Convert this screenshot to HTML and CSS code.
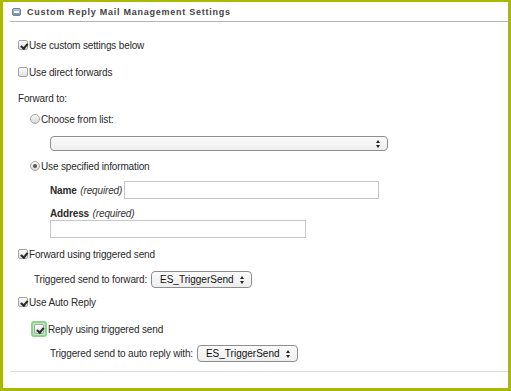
FILE: index.html
```html
<!DOCTYPE html>
<html>
<head>
<meta charset="utf-8">
<link rel="stylesheet" href="styles.css">
</head>
<body>
<div class="panel">
  <div class="header">
    <span class="collapse"><span class="minus"></span></span>
    <span class="title">Custom Reply Mail Management Settings</span>
  </div>
  <div class="body">
    <div class="row r1"><span class="cb checked"></span><span>Use custom settings below</span></div>
    <div class="row r2"><span class="cb"></span><span>Use direct forwards</span></div>
    <div class="row r3">Forward to:</div>
    <div class="row r4 ind1"><span class="radio"></span><span>Choose from list:</span></div>
    <div class="sel-row r5 ind2"><span class="select wide"><span class="arrows"></span></span></div>
    <div class="row r6 ind1"><span class="radio on"></span><span>Use specified information</span></div>
    <div class="field-row r7 ind2">
      <span class="label"><b>Name</b> <i>(required)</i></span>
      <span class="input name-input"></span>
    </div>
    <div class="row r8 ind2"><span class="label"><b>Address</b> <i>(required)</i></span></div>
    <div class="field-row r9 ind2"><span class="input addr-input"></span></div>
    <div class="row r10"><span class="cb checked"></span><span>Forward using triggered send</span></div>
    <div class="sel-row r11 ind15">
      <span class="sel-label">Triggered send to forward:</span>
      <span class="select small">ES_TriggerSend<span class="arrows"></span></span>
    </div>
    <div class="row r12"><span class="cb checked"></span><span>Use Auto Reply</span></div>
    <div class="row r13 ind-focus"><span class="focus"><span class="cb checked"></span></span><span>Reply using triggered send</span></div>
    <div class="sel-row r14 ind2">
      <span class="sel-label">Triggered send to auto reply with:</span>
      <span class="select small">ES_TriggerSend<span class="arrows"></span></span>
    </div>
  </div>
  <div class="footer-line"></div>
</div>
</body>
</html>
```
FILE: styles.css
```css
html, body {
  margin: 0;
  padding: 0;
  background: #fff;
}
body {
  font-family: "Liberation Sans", Arial, sans-serif;
  font-size: 10px;
  letter-spacing: -0.15px;
  color: #2a2a2a;
}
.panel {
  width: 505px;
  height: 386px;
  border-style: solid;
  border-color: #a9b800;
  border-width: 2px 3px 3px 3px;
  background: #fff;
  display: flex;
  flex-direction: column;
}
.header {
  margin-left: 7px;
  height: 19px;
  border-bottom: 1px solid #b5b5b5;
  display: flex;
  align-items: center;
  gap: 6px;
  padding-left: 2px;
}
.collapse {
  width: 9px;
  height: 8px;
  border-radius: 2px;
  background: linear-gradient(#b4c1d4, #7a8dab);
  border: 1px solid #7183a0;
  box-sizing: border-box;
  display: flex;
  align-items: center;
  justify-content: center;
}
.minus {
  width: 5px;
  height: 2px;
  background: #fff;
}
.title {
  font-weight: bold;
  font-size: 9px;
  letter-spacing: 0.75px;
  color: #444;
}
.body {
  display: flex;
  flex-direction: column;
  padding-left: 15px;
}
.row {
  height: 14px;
  display: flex;
  align-items: center;
}
.ind1 { padding-left: 12px; }
.ind2 { padding-left: 32px; }
.ind15 { padding-left: 16px; }
.ind-focus { padding-left: 13px; }
.cb {
  width: 10px;
  height: 10px;
  box-sizing: border-box;
  border: 1px solid #a3a3a3;
  border-radius: 2px;
  background: linear-gradient(#fdfdfd, #e0e0e0);
  margin-right: 1px;
  position: relative;
  flex: none;
}
.cb.checked::after {
  content: "";
  position: absolute;
  left: 2.5px;
  top: 0.5px;
  width: 2.5px;
  height: 4.5px;
  border: solid #2a2a2a;
  border-width: 0 2px 2px 0;
  transform: rotate(40deg);
}
.radio {
  width: 10px;
  height: 10px;
  box-sizing: border-box;
  border: 1px solid #a5a5a5;
  border-radius: 50%;
  background: linear-gradient(#f8f8f8, #d8d8d8);
  margin-right: 1px;
  position: relative;
  flex: none;
}
.radio.on::after {
  content: "";
  position: absolute;
  left: 2px;
  top: 2px;
  width: 4px;
  height: 4px;
  border-radius: 50%;
  background: #555;
}
.focus {
  width: 12px;
  height: 12px;
  border: 2px solid #8cd48c;
  border-radius: 3px;
  display: flex;
  align-items: center;
  justify-content: center;
  margin-right: 1px;
  background: #bfe8bf;
}
.focus .cb { margin-right: 0; }
.r1 { margin-top: 16px; }
.r2 { margin-top: 13px; }
.r3 { margin-top: 12px; }
.r4 { margin-top: 7px; }
.r5 { margin-top: 10px; }
.r6 { margin-top: 8px; }
.r7 { margin-top: 8px; }
.r8 { margin-top: 7px; }
.r9 { margin-top: 0px; }
.r10 { margin-top: 9px; }
.r11 { margin-top: 10px; }
.r12 { margin-top: 7px; }
.r13 { margin-top: 13px; }
.r14 { margin-top: 9px; }
.sel-row, .field-row {
  display: flex;
  align-items: center;
}
.sel-label { margin-right: 4px; }
.select {
  box-sizing: border-box;
  height: 15px;
  border: 1px solid #8e8e8e;
  border-radius: 4px;
  background: linear-gradient(#fafafa, #eeeeee);
  position: relative;
  display: flex;
  align-items: center;
  padding-left: 8px;
  font-size: 10px;
  letter-spacing: 0;
  color: #111;
}
.select.wide { width: 338px; }
.select.small { width: 101px; height: 17px; }
.arrows {
  position: absolute;
  right: 6px;
  top: 50%;
  margin-top: -4px;
  width: 5px;
  height: 8px;
}
.arrows::before {
  content: "";
  position: absolute;
  left: 0;
  top: 0;
  border-left: 2.5px solid transparent;
  border-right: 2.5px solid transparent;
  border-bottom: 3px solid #222;
}
.arrows::after {
  content: "";
  position: absolute;
  left: 0;
  bottom: 0;
  border-left: 2.5px solid transparent;
  border-right: 2.5px solid transparent;
  border-top: 3px solid #222;
}
.label b { font-weight: bold; }
.label i { color: #333; margin-left: 1px; }
.input {
  box-sizing: border-box;
  height: 18px;
  border: 1px solid #c6c6c6;
  background: #fff;
}
.name-input { width: 255px; margin-left: 2px; }
.addr-input { width: 256px; }
.footer-line {
  margin-left: 7px;
  margin-top: 9px;
  border-top: 1px solid #dcdcdc;
}
```
